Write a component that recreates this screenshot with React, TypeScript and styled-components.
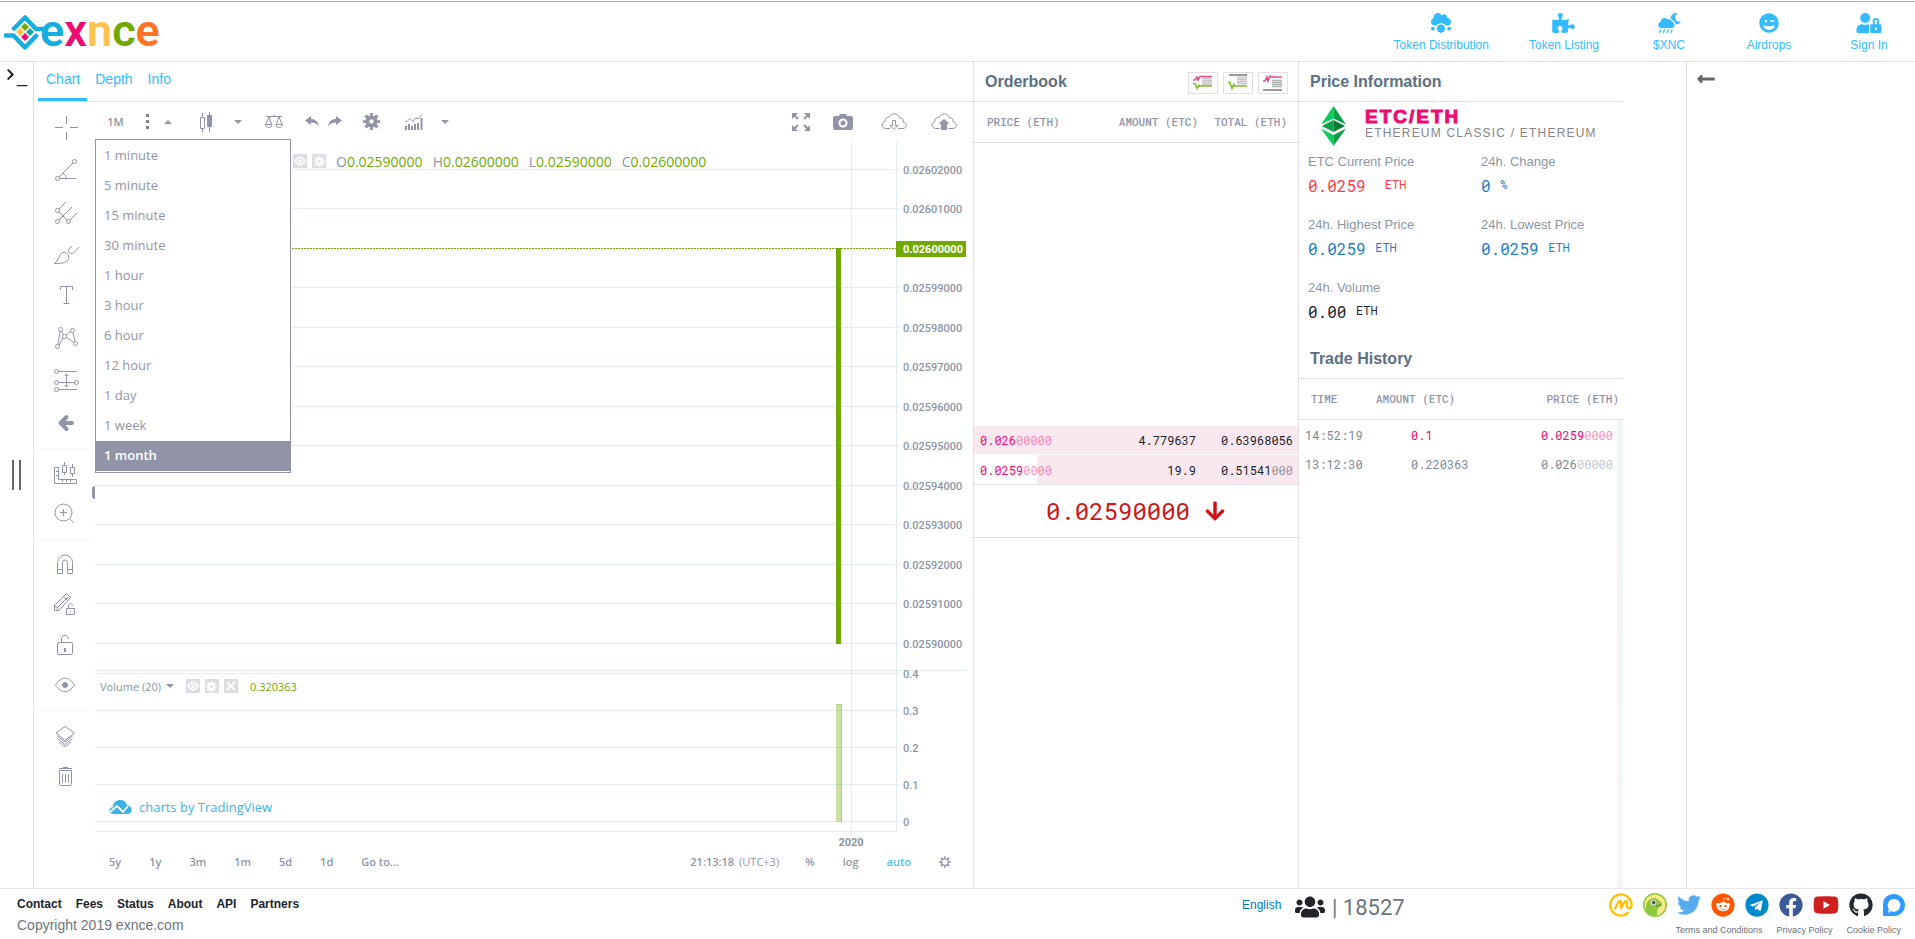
import React from 'react';
import styled, { createGlobalStyle, css } from 'styled-components';
import {
  FaArrowDown,
  FaChevronRight,
  FaCloudMeatball,
  FaCloudMoonRain,
  FaFacebook,
  FaGithub,
  FaGrinWink,
  FaLongArrowAltLeft,
  FaPuzzlePiece,
  FaReddit,
  FaTelegram,
  FaTwitter,
  FaUserLock,
  FaUsers,
  FaYoutube,
} from 'react-icons/fa';

const c = {
  line: '#dee0e4',
  grid: '#e1ecf2',
  icon: '#9194a7',
  sky: '#33bbff',
  pink: '#ec0b73',
  blue: '#1f7cc4',
  green: '#71a900',
  slate: '#5b7083',
  muted: '#8b95a3',
  ink: '#212529',
};

const sans = '"Liberation Sans", Arial, sans-serif';
const chartFont = '"Open Sans", "Trebuchet MS", sans-serif';
const mono = '"Roboto Mono", "DejaVu Sans Mono", monospace';

const GlobalStyle = createGlobalStyle`
  *, *::before, *::after { box-sizing: border-box; }
  body { margin: 0; background: #fff; color: ${c.ink}; font-family: ${sans}; }
  button { padding: 0; border: 0; background: none; font: inherit; color: inherit; cursor: pointer; }
  a { color: inherit; text-decoration: none; }
  h1, h2, p, ul, dl, dd { margin: 0; padding: 0; list-style: none; }
  svg { display: block; flex: none; }
`;

/* ---------- page frame ---------- */

const Page = styled.div`
  display: flex;
  flex-direction: column;
  min-height: 100vh;
  overflow: hidden;
`;

const Header = styled.header`
  display: flex;
  justify-content: space-between;
  height: 62px;
  border-bottom: 1px solid ${c.line};
  box-shadow: inset 0 1px #fff, inset 0 2px #b1b1b1;
`;

const Brand = styled.a`
  display: flex;
  align-items: flex-start;
  padding: 12px 0 0 4px;
`;

const Wordmark = styled.span`
  font: 600 45px/38px Roboto, sans-serif;
  margin-left: -4px;
`;

const Letter = styled.span<{ $color: string }>`
  color: ${(p) => p.$color};
`;

const Nav = styled.nav`
  display: flex;
  margin-right: -4px;
`;

const NavLink = styled.a<{ $icon: number }>`
  display: flex;
  flex-direction: column;
  align-items: center;
  gap: 4px;
  min-width: 100px;
  padding: 13px 20px 0;
  color: ${c.sky};
  font-size: 12px;
  line-height: 16px;
  white-space: nowrap;
  svg { width: ${(p) => p.$icon}px; height: 20px; }
`;

const Main = styled.main`
  display: grid;
  flex: 1;
  grid-template-columns: 34px minmax(0, 939fr) minmax(0, 325fr) minmax(0, 388fr) minmax(0, 229fr);
`;

const Rail = styled.aside`
  display: flex;
  flex-direction: column;
  align-items: center;
  justify-content: space-between;
  border-right: 1px solid ${c.line};
`;

const Prompt = styled.button`
  display: flex;
  align-self: flex-start;
  padding: 6px 0 0 4px;
  font-size: 18px;
  line-height: 16px;
`;

const Grip = styled.button`
  width: 9px;
  height: 30px;
  border: solid #666;
  border-width: 0 2px;
`;

const RailEnd = styled.span`
  height: 22px;
`;

const SidePane = styled.aside`
  padding: 7px 9px;
  border-left: 1px solid ${c.line};
  color: #666;
`;

/* ---------- chart ---------- */

const ChartColumn = styled.section`
  display: flex;
  flex-direction: column;
  min-width: 0;
  margin-left: 4px;
`;

const Tabs = styled.div`
  display: flex;
  height: 40px;
  border-bottom: 1px solid ${c.line};
`;

const Tab = styled.button<{ $on?: boolean }>`
  padding: 0 7px 2px 8px;
  border-bottom: 3px solid ${(p) => (p.$on ? c.sky : 'transparent')};
  color: ${c.sky};
  font-size: 14px;
  height: 39px;
`;

const ChartBody = styled.div`
  display: flex;
  flex: 1;
`;

const Tools = styled.div`
  width: 52px;
  margin-right: 5px;
`;

const ToolGroup = styled.div<{ $tall?: boolean }>`
  display: grid;
  grid-auto-rows: ${(p) => (p.$tall ? 42 : 40)}px;
  padding: 5px 0;
  border-bottom: 1px solid #f6f6f8;
  color: ${c.icon};
  &:last-child { border-bottom: 0; }
`;

const ToolButton = styled.button`
  display: flex;
  align-items: center;
  justify-content: center;
  padding-left: 4px;
`;

const ChartPane = styled.div`
  position: relative;
  display: flex;
  flex-direction: column;
  flex: 1;
  min-width: 0;
  font-family: ${chartFont};
`;

const Toolbar = styled.div`
  display: flex;
  align-items: center;
  height: 40px;
  padding: 0 4px 1px 0;
  color: ${c.icon};
`;

const BarButton = styled.button<{ $w: number }>`
  display: flex;
  align-items: center;
  justify-content: center;
  width: ${(p) => p.$w}px;
  height: 39px;
  font-size: 11px;
  font-weight: 600;
`;

const BarGroup = styled.div<{ $end?: boolean }>`
  display: flex;
  margin-left: ${(p) => (p.$end ? 'auto' : '6px')};
  &:first-child { margin-left: 0; }
`;

const Menu = styled.div`
  position: absolute;
  z-index: 2;
  top: 37px;
  left: 0;
  width: 196px;
  padding: 1px 0;
  border: 1px solid ${c.icon};
  background: #fff;
`;

const MenuItem = styled.button<{ $on?: boolean }>`
  display: block;
  width: 100%;
  height: 30px;
  padding: 0 0 2px 8px;
  color: ${c.icon};
  font-size: 13px;
  text-align: left;
  ${(p) => p.$on && css`
    background: ${c.icon};
    color: #fff;
    font-weight: 600;
  `}
`;

const Handle = styled.span`
  position: absolute;
  top: 384px;
  left: -3px;
  width: 3px;
  height: 13px;
  border-radius: 3px 0 0 3px;
  background: ${c.icon};
`;

const Legend = styled.div<{ $top: number; $left: number; $size: number; $gap: number }>`
  position: absolute;
  top: ${(p) => p.$top}px;
  left: ${(p) => p.$left}px;
  display: flex;
  align-items: center;
  gap: ${(p) => p.$gap}px;
  height: 20px;
  color: ${c.muted};
  font-size: ${(p) => p.$size}px;
  white-space: nowrap;
`;

const LegendButtons = styled.span`
  display: flex;
  gap: 5px;
`;

const LegendButton = styled.button`
  display: flex;
  align-items: center;
  justify-content: center;
  width: 14px;
  height: 14px;
  background: #dcdde3;
  color: #fff;
`;

const SeriesName = styled.button`
  display: flex;
  align-items: center;
  gap: 5px;
`;

const Value = styled.span`
  color: ${c.green};
`;

const Credit = styled.a`
  position: absolute;
  top: 695px;
  left: 14px;
  display: flex;
  align-items: center;
  gap: 7px;
  height: 20px;
  color: #3bb3e4;
  font-size: 13px;
`;

const RangeBar = styled.div`
  display: flex;
  align-items: center;
  height: 27px;
  padding-right: 8px;
  color: ${c.icon};
  font-size: 11px;
  font-weight: 600;
`;

const RangeButton = styled.button<{ $on?: boolean }>`
  height: 27px;
  padding: 0 14px 1px;
  color: ${(p) => (p.$on ? '#4bbfe8' : 'inherit')};
`;

const Clock = styled.span`
  display: flex;
  gap: 5px;
  margin-left: auto;
  padding: 0 12px 1px 0;
`;

const Zone = styled.span`
  font-weight: 400;
`;

/* ---------- order book and trades ---------- */

const Panel = styled.section`
  border-left: 1px solid ${c.line};
  min-width: 0;
`;

const PanelHead = styled.div`
  display: flex;
  align-items: center;
  justify-content: space-between;
  height: 40px;
  padding: 0 10px 0 11px;
  border-bottom: 1px solid ${c.line};
`;

const PanelTitle = styled.h2`
  color: ${c.slate};
  font-size: 16px;
  line-height: 20px;
`;

const ViewButtons = styled.div`
  display: flex;
  gap: 5px;
  padding-top: 2px;
`;

const ViewButton = styled.button`
  display: flex;
  align-items: center;
  justify-content: center;
  width: 30px;
  height: 22px;
  border: 1px solid #dfe0e3;
`;

const Sheet = styled.table`
  display: block;
  font-family: ${mono};
  thead, tbody { display: block; }
`;

const HeadRow = styled.tr<{ $cols: string; $inset: string }>`
  display: grid;
  grid-template-columns: ${(p) => p.$cols};
  align-items: center;
  height: 41px;
  padding: ${(p) => p.$inset};
  border-bottom: 1px solid ${c.line};
  color: ${c.icon};
  font-size: 11px;
  line-height: 14px;
  white-space: nowrap;
`;

const Th = styled.th<{ $right?: boolean }>`
  padding: 0;
  font-weight: 500;
  text-align: ${(p) => (p.$right ? 'right' : 'left')};
`;

const Asks = styled.tbody`
  && {
    display: flex;
    flex-direction: column;
    justify-content: flex-end;
    min-height: 342px;
    border-bottom: 1px solid ${c.line};
  }
`;

const AskRow = styled.tr<{ $from: number }>`
  display: grid;
  grid-template-columns: 92fr 124fr 97fr;
  align-items: center;
  height: 29px;
  padding: 0 5px 0 6px;
  border-bottom: 1px solid #fff;
  background: linear-gradient(to right, transparent ${(p) => p.$from}%, #fae8f1 ${(p) => p.$from}%);
  font-size: 12px;
  &:last-child { border-bottom: 0; }
`;

const Td = styled.td<{ $right?: boolean; $pink?: boolean }>`
  padding: 0;
  text-align: ${(p) => (p.$right ? 'right' : 'left')};
  color: ${(p) => (p.$pink ? c.pink : 'inherit')};
`;

const Faint = styled.span`
  opacity: 0.45;
`;

const LastPrice = styled.div`
  display: flex;
  align-items: center;
  justify-content: center;
  gap: 14px;
  height: 53px;
  border-bottom: 1px solid ${c.line};
  color: #cc1418;
  font: 400 24px/30px ${mono};
`;

const InfoBlock = styled.div`
  display: flex;
  flex-direction: column;
  width: 100%;
  max-width: 324px;
  height: 100%;
`;

const Pair = styled.div`
  display: grid;
  grid-template-columns: 25px 1fr;
  column-gap: 19px;
  padding: 4px 0 0 22px;
  white-space: nowrap;
`;

const PairText = styled.div`
  color: #858585;
  font-size: 12px;
  line-height: 14px;
  letter-spacing: 0.1em;
`;

const PairName = styled.h1`
  padding-top: 1px;
  color: ${c.pink};
  font-size: 19px;
  font-weight: 700;
  line-height: 19px;
  letter-spacing: 2px;
  -webkit-text-stroke: 1px ${c.pink};
`;

const Stats = styled.dl`
  display: grid;
  grid-template-columns: 173fr 142fr;
  grid-auto-rows: 63px;
  padding: 5px 0 0 9px;
`;

const StatName = styled.dt`
  color: ${c.muted};
  font-size: 13px;
  line-height: 22px;
`;

const StatValue = styled.dd<{ $color: string }>`
  color: ${(p) => p.$color};
  font: 400 16px/26px ${mono};
  white-space: pre;
`;

const Unit = styled.span`
  position: relative;
  top: -3px;
  font-size: 12px;
`;

const TradeTitle = styled(PanelTitle)`
  height: 39px;
  padding: 9px 0 0 11px;
  border-bottom: 1px solid ${c.line};
`;

const TradeArea = styled.div`
  flex: 1;
  background: linear-gradient(#eff7f7, #f3f6f8) right 41px / 6px 100% no-repeat;
`;

const TradeRow = styled.tr`
  display: grid;
  grid-template-columns: 106fr 100fr 102fr;
  align-items: center;
  height: 29px;
  padding: 0 10px 0 6px;
  color: #7c8898;
  font-size: 12px;
`;

/* ---------- footer ---------- */

const Footer = styled.footer`
  display: grid;
  grid-template-columns: minmax(0, 1242fr) minmax(0, 368fr) minmax(0, 305fr);
  height: 51px;
  border-top: 1px solid #e6e6e6;
  white-space: nowrap;
`;

const FooterLeft = styled.div`
  padding: 7px 0 0 17px;
  color: #6c757d;
  font-size: 14px;
`;

const FooterLinks = styled.nav`
  display: flex;
  gap: 14px;
  height: 21px;
  color: ${c.ink};
  font-size: 12px;
  font-weight: 700;
  line-height: 16px;
`;

const Online = styled.div`
  display: flex;
  align-items: flex-start;
  font-size: 12px;
  padding-top: 3px;
`;

const Language = styled.a`
  width: 53px;
  padding-top: 6px;
  color: #0076bd;
`;

const Count = styled.span`
  margin-left: 7px;
  color: #6c757d;
  font: 400 22px/32px Roboto, sans-serif;
`;

const FooterRight = styled.div`
  display: flex;
  flex-direction: column;
  align-items: flex-end;
  gap: 6px;
  padding: 4px 10px 0 0;
`;

const Social = styled.div`
  display: flex;
  gap: 10px;
`;

const SocialLink = styled.a<{ $color: string; $w: number }>`
  color: ${(p) => p.$color};
  svg { width: ${(p) => p.$w}px; height: 24px; }
`;

const Policies = styled.nav`
  display: flex;
  gap: 14px;
  padding-right: 4px;
  color: #6a6f75;
  font-size: 9px;
  line-height: 14px;
`;

/* ---------- drawings ---------- */

const Glyph = ({ w = 28, children }: { w?: number; children: React.ReactNode }) => (
  <svg width={w} height={w} viewBox={`0 0 ${w} ${w}`} fill="none" stroke="currentColor">
    {children}
  </svg>
);

const LogoMark = () => (
  <svg width="40" height="40" viewBox="0 0 40 40" fill="none" stroke="#16aee0" strokeWidth="4.5" strokeLinecap="round" strokeLinejoin="round">
    <path d="M10 16.500 21 5.500 32 17H39" />
    <path d="M2 23.500H9.500L21 35.500 32 24" />
    <g stroke="none">
      <path fill="#71a900" d="M21 11l4 4-4 4-4-4z" />
      <path fill="#ffc24d" d="M16 16l4 4-4 4-4-4z" />
      <path fill="#12a5a0" d="M26 16l4 4-4 4-4-4z" />
      <path fill="#ec0b73" d="M21 21l4 4-4 4-4-4z" />
    </g>
  </svg>
);

const toolGroups: { name: string; art: React.ReactNode }[][] = [
  [
    { name: 'Cross', art: <path d="M14.500 2v8M14.500 18v8M3 13.500h8M18 13.500h8" /> },
    { name: 'Trend angle', art: <><circle cx="5.500" cy="22.500" r="2" /><circle cx="22.500" cy="5.500" r="2" /><path d="M7 21 21 7M7.500 22.500H24M11 17q3.500 2 3 5.500" /></> },
    { name: 'Pitchfork', art: <><circle cx="5.500" cy="12.500" r="2" /><circle cx="5.500" cy="23.500" r="2" /><circle cx="16.500" cy="23.500" r="2" /><path d="M7 11 14 4M7 22 20 9M18 22 25 15M7 14l8 8" /></> },
    { name: 'Brush', art: <path d="M2.500 23.500c4-2 4-9 8-11 4-1 7 2 6 6-1 4-5 5-14 5zM27.500 7l-6 6c-3 1.500-6-.5-4.500-4 .5-1.500 1.500-2 3-2" /> },
    { name: 'Text', art: <path d="M8.500 8V4.500h12V8M14.500 4.500v17M11.500 21.500h6" /> },
    { name: 'Pattern', art: <><circle cx="5.500" cy="22.500" r="2" /><circle cx="8.500" cy="5.500" r="2" /><circle cx="12.500" cy="12.500" r="2" /><circle cx="20.500" cy="6.500" r="2" /><circle cx="23.500" cy="19.500" r="2" /><path d="M5.800 20.500 8.200 7.500M9.500 7.200l2 3.600M14 11l5-3.500M21 8.500l2 9M14.300 13.500l7.500 5M11 14l-4 7" /></> },
    { name: 'Forecast', art: <><circle cx="4.500" cy="5.500" r="2" /><circle cx="4.500" cy="16.500" r="2" /><circle cx="24.500" cy="16.500" r="2" /><circle cx="4.500" cy="23.500" r="2" /><path d="M6.500 5.500H25M6.500 16.500h16M6.500 23.500H25M14.500 8v13M12.500 10l2-2 2 2M12.500 19l2 2 2-2" /></> },
    { name: 'Back', art: <path strokeWidth="4" strokeLinecap="round" strokeLinejoin="round" d="M14.500 9 8.500 15l6 6M9 15h11" /> },
  ],
  [
    { name: 'Measure', art: <path d="M2.500 7.500h4v12h18v4h-22zM10.500 5.500h4v7h-4zM12.500 2v3.500M12.500 12.500V15M18.500 7.500h4v6h-4zM20.500 4v3.500M20.500 13.500V17M4 11.500h2.500M4 15.500h2.500M10.500 22v-2.500M14.500 22v-2.500M18.500 22v-2.500" /> },
    { name: 'Zoom in', art: <><circle cx="11.500" cy="12.500" r="8.500" /><path d="M18 19l3.500 3.500M8 12.500h7M11.500 9v7" /></> },
  ],
  [
    { name: 'Magnet', art: <path d="M5.500 22.500v-11a7.500 7.500 0 0 1 15 0v11h-5v-11a2.500 2.500 0 0 0-5 0v11zM5.500 18.500h5M15.500 18.500h5" /> },
    { name: 'Keep drawing', art: <path d="M2.500 19.500v-5L14.500 2.500l4 4L7 19.500zM5 17 16 6M11.500 5.500l4 4M2.500 14.500l4.500 5M14.500 17.500h8v6h-8zM16.500 17v-2c0-3 4-3 4-.5M18.500 20v1.500" /> },
    { name: 'Lock drawings', art: <><rect x="5.500" y="11.500" width="15" height="12" rx="1.500" /><path d="M9.500 11V8c0-5 7-5 7 0" /><path strokeWidth="2" d="M13 17v4" /></> },
    { name: 'Hide drawings', art: <><path d="M3.500 14c6-9 13-9 19 0-6 9-13 9-19 0z" /><circle cx="13" cy="14" r="2.500" fill="currentColor" /></> },
  ],
  [
    { name: 'Objects', art: <path d="M13 4.500l9.500 6.500-9.500 7.500L4 11zM5.500 14 13 20l7.500-6M5.500 16.500 13 22.500l7.500-6M7 20l6 5 6-5" /> },
    { name: 'Delete', art: <path d="M7 6.500h13M11 5.500h5M7.500 8.500h12v14l-1 1h-10l-1-1zM10.500 12v8.500M13.500 12v8.500M16.500 12v8.500" /> },
  ],
];

const Caret = ({ up = false }: { up?: boolean }) => (
  <svg width="8" height="4" viewBox="0 0 8 4" fill="currentColor">
    <path d={up ? 'M0 4h8L4 0z' : 'M0 0h8L4 4z'} />
  </svg>
);

const gearPath =
  'M8 0h2v3l2 .8L14.200 2 16 3.800 14.200 6 15 8h3v2h-3l-.8 2 1.800 2.200-1.800 1.800-2.200-1.800-2 .8v3H8v-3l-2-.8L3.800 16 2 14.200 3.800 12 3 10H0V8h3l.8-2L2 3.800 3.800 2 6 3.800 8 3z';

const Gear = ({ size, outline = false }: { size: number; outline?: boolean }) => (
  <svg width={size} height={size} viewBox="0 0 18 18" fill="currentColor" fillRule="evenodd" stroke="currentColor" strokeWidth={outline ? 0 : 0.8}>
    <path d={`${gearPath}${outline ? 'M9 4.800a4.200 4.200 0 1 0 .01 0z' : 'M9 6.300a2.700 2.700 0 1 0 .01 0z'}`} />
  </svg>
);

const Candles = () => (
  <svg width="12" height="20" viewBox="0 0 12 20" fill="none" stroke="currentColor">
    <path d="M2.500 1v4M2.500 17v3M.5 5.500h4v11h-4zM9.500 0v20" />
    <path fill="currentColor" d="M7.500 3.500h4v11h-4z" />
  </svg>
);

const Scales = () => (
  <svg width="18" height="16" viewBox="0 0 18 16" fill="none" stroke="currentColor">
    <path d="M1 2.500h16M9 .5v2M4 3 .8 10.500M4 3l2.700 7.500M14 3l-2.700 7.500M14 3l3.200 7.500" />
    <path d="M.5 10.500h6.500c0 4-6.500 4-6.500 0zM11 10.500h6.500c0 4-6.500 4-6.500 0z" />
  </svg>
);

const Undo = ({ flip = false }: { flip?: boolean }) => (
  <svg width="14" height="11" viewBox="0 0 14 11" fill="currentColor">
    <path transform={flip ? 'matrix(-1 0 0 1 14 0)' : undefined} d="M0 4.500 6 0v3c4 0 7 2 8 7.500-2-3-4-4-8-4V9z" />
  </svg>
);

const Indicators = () => (
  <svg width="18" height="16" viewBox="0 0 18 16" fill="none" stroke="currentColor">
    <path d="M0 7.500h2l3-3 3 3 3-4 2 1.500 4-4.500" />
    <path strokeWidth="2" d="M1 16v-4M4 16v-6M7 16v-4M10 16v-6M13 16V9M16.500 16V4" />
  </svg>
);

const Expand = () => (
  <svg width="18" height="18" viewBox="0 0 18 18" fill="currentColor" stroke="currentColor">
    <path strokeWidth="2" d="M2 2l4 4M16 2l-4 4M2 16l4-4M16 16l-4-4" />
    <path stroke="none" d="M0 0h6L0 6zM18 0h-6l6 6zM0 18h6l-6-6zM18 18h-6l6-6z" />
  </svg>
);

const Camera = () => (
  <svg width="20" height="16" viewBox="0 0 20 16" fill="currentColor" fillRule="evenodd">
    <path d="M2 2h4l1-2h6l1 2h4q2 0 2 2v10q0 2-2 2H2q-2 0-2-2V4q0-2 2-2zM10 4.500a4.500 4.500 0 1 0 .01 0zM10 6.500a2.500 2.500 0 1 1-.01 0z" />
  </svg>
);

const Cloud = ({ up = false }: { up?: boolean }) => (
  <svg width="26" height="17" viewBox="0 0 26 17" fill="none" stroke="currentColor">
    <path d="M9 15.500H4.500C0 15 0 9.500 4 8.500 4 5 6 4 8 4.500c2-5 9-5 10.500.5 3-.5 4 1.500 3.500 4 4.500.5 4.500 6 0 6.500h-5" />
    {up ? <path fill="currentColor" d="M10.500 16.500v-6H8.500L13 6.500l4.500 4h-2v6z" /> : <path d="M11.500 7.500h3v5h2.500L13 16.500l-4-4h2.500z" />}
  </svg>
);

const EyeMini = () => (
  <svg width="12" height="10" viewBox="0 0 12 10" fill="none" stroke="currentColor" strokeWidth="1.600">
    <path d="M1 5c3-5 7-5 10 0-3 5-7 5-10 0z" />
    <circle cx="6" cy="5" r="1.200" />
  </svg>
);

const CrossMini = () => (
  <svg width="10" height="10" viewBox="0 0 10 10" stroke="currentColor" strokeWidth="2">
    <path d="M1 1l8 8M9 1 1 9" />
  </svg>
);

const TvCloud = () => (
  <svg width="23" height="14" viewBox="0 0 23 14">
    <path fill="#3bb3e4" d="M4 14C-1 13-1 8 4 7 4 2 8 0 11 0c4 0 6 2 7 5 6 1 6 8 1 9z" />
    <path fill="none" stroke="#fff" strokeWidth="1.800" d="M1 12l7-6 6 6 5-6" />
  </svg>
);

const BookIcon = ({ kind }: { kind: 'both' | 'bids' | 'asks' }) => (
  <svg width="20" height="17" viewBox="0 0 20 17" fill="none" strokeWidth="1.500">
    {kind === 'both' && (
      <>
        <path stroke="#c4c4c4" d="M9 4.500h10M9 6.500h10M9 8.500h10M9 10.500h10" />
        <path stroke="#ee4590" d="M0 6h2l2-3 1 3 2-4v.5h12" />
        <path stroke="#82b62a" d="M0 9.500h2l2 5 2-4v1.500h13" />
      </>
    )}
    {kind === 'bids' && (
      <>
        <path stroke="#777" d="M1 1h18" />
        <path stroke="#c4c4c4" d="M9 3.500h10M9 5.500h10M9 7.500h10M9 9.500h10" />
        <path stroke="#82b62a" d="M0 8.500h2l2 6 2-5v2.500h13" />
      </>
    )}
    {kind === 'asks' && (
      <>
        <path stroke="#ee4590" d="M0 7h2l2-4 1 4 2-5 1 1h11" />
        <path stroke="#b0b0b0" d="M9 6.500h10M9 8.500h10M9 10.500h10M9 12.500h10" />
        <path stroke="#777" d="M0 16h19" />
      </>
    )}
  </svg>
);

const EtcCoin = () => (
  <svg width="25" height="40" viewBox="0 0 25 40">
    <path fill="#0ccb5c" d="M12.500 0v12.500L0 18.500z" />
    <path fill="#0a9d45" d="M12.500 0v12.500L25 18.500z" />
    <path fill="#0ba34a" d="M12.500 14 1 20l11.500 6z" />
    <path fill="#087a36" d="M12.500 14 24 20l-11.500 6z" />
    <path fill="#0ccb5c" d="M0 22.500l12.500 6.500v11z" />
    <path fill="#0a9d45" d="M25 22.500 12.500 29v11z" />
  </svg>
);

const CoinMarket = () => (
  <svg viewBox="0 0 24 24" fill="none" stroke="#ffc107" strokeWidth="2.400" strokeLinecap="round" strokeLinejoin="round">
    <path d="M19 20a10.600 10.600 0 1 1 3.600-8c0 4-4.600 4-4.600 1V9.500c0-2-1.500-2-2.500-.5L12 15V9.500c0-2-1.500-2-2.500-.5L6 15.500" />
  </svg>
);

const Gecko = () => (
  <svg viewBox="0 0 24 24">
    <circle cx="12" cy="12" r="12" fill="#8dc63f" />
    <circle cx="12" cy="12" r="10.500" fill="#f9e988" />
    <path fill="#8dc63f" d="M3 18C2 10 6 5 11 5c3 0 4 2 7 4 2 2 1 4-1 5-3 1-3 5-3 8.300C9 23 5 21 3 18z" />
    <circle cx="10.500" cy="9.500" r="2.800" fill="#fff" />
    <circle cx="10.700" cy="9.500" r="1.900" fill="#58595b" />
    <path fill="none" stroke="#58595b" strokeWidth=".7" d="M13 13q3 0 5-1.500" />
  </svg>
);

const Bubble = () => (
  <svg viewBox="0 0 22 24">
    <path fill="#2f9bff" d="M0 22V11.500C0 5 5 1 11 1s11 5 11 11-5 11-11 11H1q-1 0-1-1z" />
    <path fill="#fff" d="M5 20l.8-4C3 11 6 6 11 6s8 5 5.500 9.500C14.500 19 10 19.500 8 18z" />
  </svg>
);

/* ---------- plot ---------- */

const priceTicks: [string, number][] = [
  ['0.02602000', 27], ['0.02601000', 66], ['0.02599000', 145], ['0.02598000', 185], ['0.02597000', 224],
  ['0.02596000', 264], ['0.02595000', 303], ['0.02594000', 343], ['0.02593000', 382], ['0.02592000', 422],
  ['0.02591000', 461], ['0.02590000', 501],
];
const volumeTicks: [string, number][] = [['0.4', 531], ['0.3', 568], ['0.2', 605], ['0.1', 642], ['0', 679]];

const PlotArea = styled.svg`
  width: 100%;
  height: 706px;
  font: 500 11px Roboto, sans-serif;
`;

/* The time and price axes hang from the right edge, so the inner group is anchored at 100%. */
const Plot = () => (
  <PlotArea aria-label="ETC/ETH price and volume">
    <svg x="100%" overflow="visible">
      <g shapeRendering="crispEdges" fill={c.grid}>
        {[...priceTicks, ...volumeTicks].map(([label, y]) => (
          <g key={label}>
            <rect x="-3000" y={y} width="2922" height="1" />
            <rect x="-77" y={y} width="4" height="1" />
          </g>
        ))}
        <rect x="-3000" y="528" width="2993" height="1" />
        <rect x="-3000" y="689" width="2924" height="1" />
        <rect x="-77" y="0" width="1" height="690" />
        <rect x="-122" y="0" width="1" height="692" />
        <path stroke={c.green} strokeDasharray="2 1" d="M-3000 106.500H-77" />
        <rect x="-137" y="106" width="5" height="396" fill={c.green} />
        <rect x="-137" y="562" width="6" height="118" fill={c.green} opacity=".35" />
        <path fill="none" stroke={c.green} opacity=".3" d="M-137 562.500h5.500v117" />
        <rect x="-77" y="99" width="70" height="16" fill={c.green} />
      </g>
      <g fill={c.muted} dominantBaseline="central">
        {[...priceTicks, ...volumeTicks].map(([label, y]) => (
          <text key={label} x="-70" y={y + 1}>{label}</text>
        ))}
        <text x="-70" y="107" fill="#fff" fontWeight="700">0.02600000</text>
        <text x="-122" y="700" textAnchor="middle" fontWeight="700">2020</text>
      </g>
    </svg>
  </PlotArea>
);

/* ---------- content ---------- */

const intervals = ['1 minute', '5 minute', '15 minute', '30 minute', '1 hour', '3 hour', '6 hour', '12 hour', '1 day', '1 week', '1 month'];

const navItems = [
  { label: 'Token Distribution', icon: <FaCloudMeatball />, w: 20 },
  { label: 'Token Listing', icon: <FaPuzzlePiece />, w: 23 },
  { label: '$XNC', icon: <FaCloudMoonRain />, w: 23 },
  { label: 'Airdrops', icon: <FaGrinWink />, w: 20 },
  { label: 'Sign In', icon: <FaUserLock />, w: 26 },
];

const ohlc = [['O', '0.02590000'], ['H', '0.02600000'], ['L', '0.02590000'], ['C', '0.02600000']];

const stats = [
  { name: 'ETC Current Price', value: '0.0259', gap: '  ', unit: 'ETH', color: '#fa3c46' },
  { name: '24h. Change', value: '0', gap: ' ', unit: '%', color: c.blue },
  { name: '24h. Highest Price', value: '0.0259', gap: ' ', unit: 'ETH', color: c.blue },
  { name: '24h. Lowest Price', value: '0.0259', gap: ' ', unit: 'ETH', color: c.blue },
  { name: '24h. Volume', value: '0.00', gap: ' ', unit: 'ETH', color: c.ink },
];

const asks = [
  { price: ['0.026', '00000'], amount: '4.779637', total: ['0.63968056', ''], from: 0 },
  { price: ['0.0259', '0000'], amount: '19.9', total: ['0.51541', '000'], from: 19.5 },
];

const trades = [
  { time: '14:52:19', amount: '0.1', price: ['0.0259', '0000'], sell: true },
  { time: '13:12:30', amount: '0.220363', price: ['0.026', '00000'], sell: false },
];

const social = [
  { name: 'CoinMarketCap', color: '#ffc107', icon: <CoinMarket />, w: 24 },
  { name: 'CoinGecko', color: '#8dc63f', icon: <Gecko />, w: 24 },
  { name: 'Twitter', color: '#55acee', icon: <FaTwitter />, w: 24 },
  { name: 'Reddit', color: '#ff5700', icon: <FaReddit />, w: 24 },
  { name: 'Telegram', color: '#0088cc', icon: <FaTelegram />, w: 24 },
  { name: 'Facebook', color: '#3b5998', icon: <FaFacebook />, w: 24 },
  { name: 'YouTube', color: '#cd201f', icon: <FaYoutube />, w: 26 },
  { name: 'GitHub', color: '#24292e', icon: <FaGithub />, w: 24 },
  { name: 'Chat', color: '#2f9bff', icon: <Bubble />, w: 22 },
];

const Amount = ({ parts }: { parts: string[] }) => (
  <>
    {parts[0]}
    {parts[1] && <Faint>{parts[1]}</Faint>}
  </>
);

export default function App() {
  return (
    <Page>
      <GlobalStyle />
      <Header>
        <Brand href="#" aria-label="exnce">
          <LogoMark />
          <Wordmark>
            <Letter $color="#16aee0">e</Letter>
            <Letter $color="#ec0b73">x</Letter>
            <Letter $color="#ffc24d">n</Letter>
            <Letter $color="#71a900">c</Letter>
            <Letter $color="#ff7324">e</Letter>
          </Wordmark>
        </Brand>
        <Nav>
          {navItems.map((n) => (
            <NavLink href="#" key={n.label} $icon={n.w}>{n.icon}{n.label}</NavLink>
          ))}
        </Nav>
      </Header>

      <Main>
        <Rail>
          <Prompt aria-label="Console"><FaChevronRight size={13} />_</Prompt>
          <Grip aria-label="Resize" />
          <RailEnd />
        </Rail>

        <ChartColumn>
          <Tabs>
            <Tab $on>Chart</Tab>
            <Tab>Depth</Tab>
            <Tab>Info</Tab>
          </Tabs>
          <ChartBody>
            <Tools>
              {toolGroups.map((group, i) => (
                <ToolGroup key={i} $tall={i === 0}>
                  {group.map((t) => (
                    <ToolButton key={t.name} aria-label={t.name}><Glyph>{t.art}</Glyph></ToolButton>
                  ))}
                </ToolGroup>
              ))}
            </Tools>
            <ChartPane>
              <Toolbar>
                <BarGroup>
                  <BarButton $w={41}>1M</BarButton>
                  <BarButton $w={22} aria-label="More intervals">
                    <svg width="3" height="15" fill="#7d7f8c"><path d="M0 0h3v3H0zM0 6h3v3H0zM0 12h3v3H0z" /></svg>
                  </BarButton>
                  <BarButton $w={20} aria-label="Close intervals"><Caret up /></BarButton>
                </BarGroup>
                <BarGroup>
                  <BarButton $w={44} aria-label="Bar style"><Candles /></BarButton>
                  <BarButton $w={20} aria-label="Bar styles"><Caret /></BarButton>
                  <BarButton $w={52} aria-label="Compare"><Scales /></BarButton>
                  <BarButton $w={24} aria-label="Undo"><Undo /></BarButton>
                  <BarButton $w={22} aria-label="Redo"><Undo flip /></BarButton>
                  <BarButton $w={50} aria-label="Settings"><Gear size={17} /></BarButton>
                  <BarButton $w={36} aria-label="Indicators"><Indicators /></BarButton>
                  <BarButton $w={26} aria-label="Indicator templates"><Caret /></BarButton>
                </BarGroup>
                <BarGroup $end>
                  <BarButton $w={32} aria-label="Full screen"><Expand /></BarButton>
                  <BarButton $w={52} aria-label="Snapshot"><Camera /></BarButton>
                  <BarButton $w={50} aria-label="Load chart"><Cloud /></BarButton>
                  <BarButton $w={50} aria-label="Save chart"><Cloud up /></BarButton>
                </BarGroup>
              </Toolbar>
              <Plot />
              <Legend $top={49} $left={198} $size={14} $gap={10}>
                <LegendButtons>
                  <LegendButton aria-label="Hide series"><EyeMini /></LegendButton>
                  <LegendButton aria-label="Series settings"><Gear size={11} /></LegendButton>
                </LegendButtons>
                {ohlc.map(([k, v]) => (
                  <span key={k}>{k}<Value>{v}</Value></span>
                ))}
              </Legend>
              <Legend $top={574} $left={5} $size={11} $gap={12}>
                <SeriesName>Volume (20) <Caret /></SeriesName>
                <LegendButtons>
                  <LegendButton aria-label="Hide volume"><EyeMini /></LegendButton>
                  <LegendButton aria-label="Volume settings"><Gear size={11} /></LegendButton>
                  <LegendButton aria-label="Remove volume"><CrossMini /></LegendButton>
                </LegendButtons>
                <Value>0.320363</Value>
              </Legend>
              <Credit href="#"><TvCloud />charts by TradingView</Credit>
              <Menu>
                {intervals.map((label) => (
                  <MenuItem key={label} $on={label === '1 month'}>{label}</MenuItem>
                ))}
              </Menu>
              <Handle />
              <RangeBar>
                {['5y', '1y', '3m', '1m', '5d', '1d', 'Go to...'].map((r) => (
                  <RangeButton key={r}>{r}</RangeButton>
                ))}
                <Clock>21:13:18 <Zone>(UTC+3)</Zone></Clock>
                <RangeButton>%</RangeButton>
                <RangeButton>log</RangeButton>
                <RangeButton $on>auto</RangeButton>
                <BarButton $w={40} aria-label="Scale settings"><Gear size={12} outline /></BarButton>
              </RangeBar>
            </ChartPane>
          </ChartBody>
        </ChartColumn>

        <Panel>
          <PanelHead>
            <PanelTitle>Orderbook</PanelTitle>
            <ViewButtons>
              <ViewButton aria-label="Both sides"><BookIcon kind="both" /></ViewButton>
              <ViewButton aria-label="Bids"><BookIcon kind="bids" /></ViewButton>
              <ViewButton aria-label="Asks"><BookIcon kind="asks" /></ViewButton>
            </ViewButtons>
          </PanelHead>
          <Sheet>
            <thead>
              <HeadRow $cols="95fr 116fr 89fr" $inset="0 11px 0 13px">
                <Th>PRICE (ETH)</Th>
                <Th $right>AMOUNT (ETC)</Th>
                <Th $right>TOTAL (ETH)</Th>
              </HeadRow>
            </thead>
            <Asks>
              {asks.map((a) => (
                <AskRow key={a.amount} $from={a.from}>
                  <Td $pink><Amount parts={a.price} /></Td>
                  <Td $right>{a.amount}</Td>
                  <Td $right><Amount parts={a.total} /></Td>
                </AskRow>
              ))}
            </Asks>
          </Sheet>
          <LastPrice>0.02590000 <FaArrowDown size={22} /></LastPrice>
        </Panel>

        <Panel>
          <InfoBlock>
            <PanelHead><PanelTitle>Price Information</PanelTitle></PanelHead>
            <Pair>
              <EtcCoin />
              <PairText>
                <PairName>ETC/ETH</PairName>
                ETHEREUM CLASSIC / ETHEREUM
              </PairText>
            </Pair>
            <Stats>
              {stats.map((s) => (
                <div key={s.name}>
                  <StatName>{s.name}</StatName>
                  <StatValue $color={s.color}>{s.value + s.gap}<Unit>{s.unit}</Unit></StatValue>
                </div>
              ))}
            </Stats>
            <TradeTitle>Trade History</TradeTitle>
            <TradeArea>
              <Sheet>
                <thead>
                  <HeadRow $cols="65fr 100fr 143fr" $inset="0 4px 0 12px">
                    <Th>TIME</Th>
                    <Th>AMOUNT (ETC)</Th>
                    <Th $right>PRICE (ETH)</Th>
                  </HeadRow>
                </thead>
                <tbody>
                  {trades.map((t) => (
                    <TradeRow key={t.time}>
                      <Td>{t.time}</Td>
                      <Td $pink={t.sell}>{t.amount}</Td>
                      <Td $right $pink={t.sell}><Amount parts={t.price} /></Td>
                    </TradeRow>
                  ))}
                </tbody>
              </Sheet>
            </TradeArea>
          </InfoBlock>
        </Panel>

        <SidePane><FaLongArrowAltLeft size={20} /></SidePane>
      </Main>

      <Footer>
        <FooterLeft>
          <FooterLinks>
            {['Contact', 'Fees', 'Status', 'About', 'API', 'Partners'].map((l) => (
              <a href="#" key={l}>{l}</a>
            ))}
          </FooterLinks>
          Copyright 2019 exnce.com
        </FooterLeft>
        <Online>
          <Language href="#">English</Language>
          <FaUsers size={30} />
          <Count>| 18527</Count>
        </Online>
        <FooterRight>
          <Social>
            {social.map((s) => (
              <SocialLink href="#" key={s.name} $color={s.color} $w={s.w} aria-label={s.name}>{s.icon}</SocialLink>
            ))}
          </Social>
          <Policies>
            <a href="#">Terms and Conditions</a>
            <a href="#">Privacy Policy</a>
            <a href="#">Cookie Policy</a>
          </Policies>
        </FooterRight>
      </Footer>
    </Page>
  );
}
